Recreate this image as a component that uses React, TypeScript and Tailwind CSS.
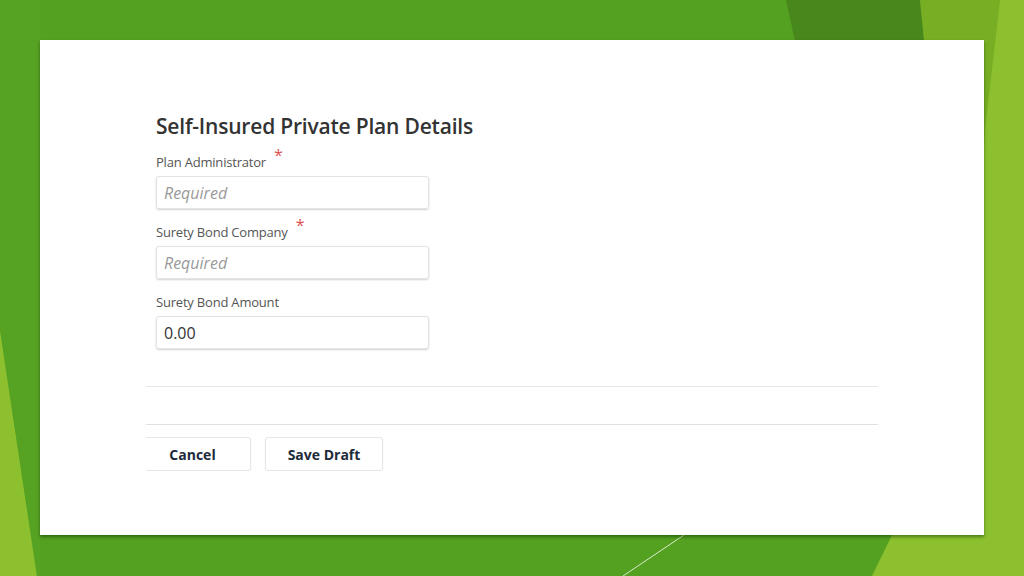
import React from "react";

function Background() {
  return (
    <svg className="absolute inset-0" width="1024" height="576" viewBox="0 0 1024 576">
      <rect x="0" y="0" width="1024" height="576" fill="#54a021" />
      <polygon points="786,0 920,0 940,200 830,200" fill="#47871c" />
      <polygon points="920,0 1000,0 990,200 940,200" fill="#78ae23" />
      <polygon points="1000,0 1024,0 1024,576 960,576 985,130" fill="#8cc02e" />
      <polygon points="892,535 1024,535 1024,576 872,576" fill="#8cc02e" />
      <polygon points="0,330 0,576 37,576" fill="#8cc02e" />
      <polygon points="0,0 40,0 40,576 37,576 0,330" fill="#58a324" opacity="0.6" />
      <line x1="623" y1="576" x2="684" y2="535" stroke="#d8ecc8" strokeWidth="1" />
    </svg>
  );
}

function Field({ label, required, value }: { label: string; required?: boolean; value?: string }) {
  return (
    <div className="flex flex-col pl-[10px]">
      <div className="flex items-start h-[25px]">
        <span className="text-[13px] leading-[20px] text-[#555] mt-[1px] tracking-[-0.2px]">{label}</span>
        {required && <span className="text-[#d9534f] text-[16px] leading-[16px] ml-[8px] mt-[-4px]">*</span>}
      </div>
      <div className="w-[273px] h-[33px] border border-[#e3e3e3] rounded-[3px] shadow-[0_1px_2px_rgba(0,0,0,0.18)] flex items-center px-[7px]">
        {value ? (
          <span className="text-[16px] text-[#333]">{value}</span>
        ) : (
          <span className="text-[16px] italic text-[#9a9a9a]">Required</span>
        )}
      </div>
    </div>
  );
}

export default function App() {
  return (
    <div className="relative w-[1024px] h-[576px] overflow-hidden" style={{ fontFamily: '"Open Sans", "Noto Sans", sans-serif' }}>
      <Background />
      <div className="relative pt-[40px] pl-[40px]">
        <div className="w-[944px] h-[495px] bg-white shadow-[0_2px_3px_rgba(0,40,0,0.45)] flex flex-col">
          <div className="ml-[106px] w-[732px] overflow-hidden flex flex-col pt-[71px]">
            <h1 className="pl-[10px] text-[21px] leading-[30px] font-semibold text-[#333] tracking-[-0.2px]">Self-Insured Private Plan Details</h1>
            <div className="flex flex-col gap-[12px] mt-[10px]">
              <Field label="Plan Administrator" required />
              <Field label="Surety Bond Company" required />
              <Field label="Surety Bond Amount" value="0.00" />
            </div>
            <div className="border-t border-[#e6e6e6] mt-[37px]" />
            <div className="border-t border-[#e0e0e0] mt-[37px]" />
            <div className="flex gap-[14px] mt-[12px] ml-[-12px]">
              <button className="w-[117px] h-[34px] border border-[#e6e6e6] rounded-[3px] bg-white text-[14px] font-bold text-[#1d2b3a] shadow-[0_1px_2px_rgba(0,0,0,0.06)]">Cancel</button>
              <button className="w-[118px] h-[34px] border border-[#e6e6e6] rounded-[3px] bg-white text-[14px] font-bold text-[#1d2b3a] shadow-[0_1px_2px_rgba(0,0,0,0.06)]">Save Draft</button>
            </div>
          </div>
        </div>
      </div>
    </div>
  );
}
